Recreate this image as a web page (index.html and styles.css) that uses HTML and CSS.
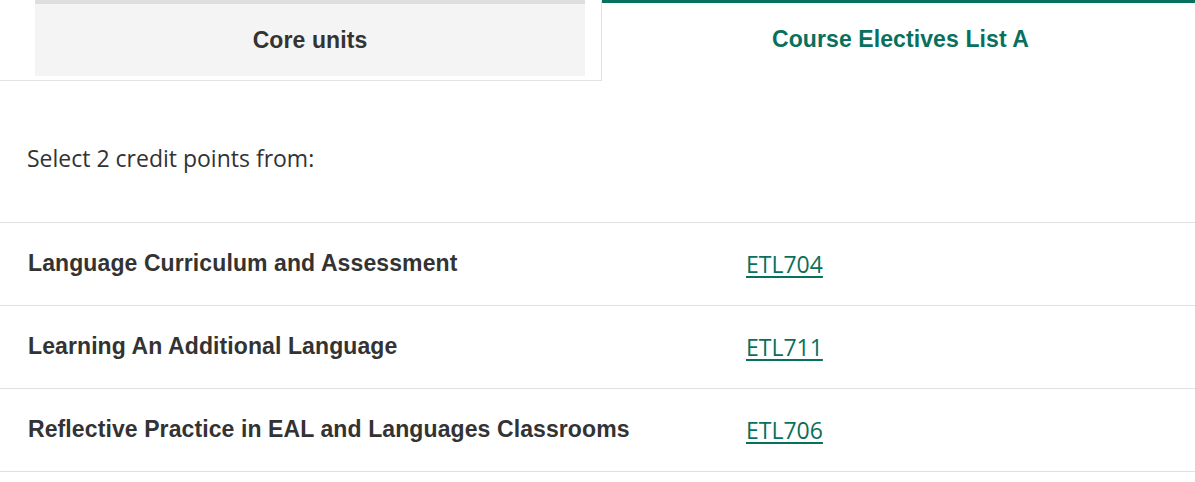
FILE: index.html
```html
<!DOCTYPE html>
<html>
<head>
<meta charset="utf-8">
<link rel="stylesheet" href="styles.css">
</head>
<body>
<div class="tabs">
  <div class="tab tab-inactive">
    <div class="tab-inner">Core units</div>
  </div>
  <div class="tab tab-active">Course Electives List A</div>
</div>
<p class="intro">Select 2 credit points from:</p>
<div class="units">
  <div class="row">
    <div class="name">Language Curriculum and Assessment</div>
    <div class="code"><a href="#">ETL704</a></div>
  </div>
  <div class="row">
    <div class="name">Learning An Additional Language</div>
    <div class="code"><a href="#">ETL711</a></div>
  </div>
  <div class="row">
    <div class="name">Reflective Practice in EAL and Languages Classrooms</div>
    <div class="code"><a href="#">ETL706</a></div>
  </div>
</div>
</body>
</html>
```

FILE: styles.css
```css
* { box-sizing: border-box; }
html, body { margin: 0; padding: 0; background: #fff; }
body { width: 1195px; overflow: hidden; color: #333; }

.tabs { display: flex; height: 81px; }
.tab {
  font-family: "Liberation Sans", Arial, sans-serif;
  font-weight: bold;
  font-size: 23px;
  letter-spacing: 0.1px;
}
.tab-inactive {
  width: 602px;
  height: 81px;
  padding: 0 16px 4px 35px;
  border-right: 1px solid #e2e2e2;
  border-bottom: 1px solid #e2e2e2;
}
.tab-inner {
  height: 76px;
  background: #f4f4f4;
  border-top: 4px solid #dedede;
  display: flex;
  align-items: center;
  justify-content: center;
  color: #333;
}
.tab-active {
  flex: 1;
  height: 80px;
  border-top: 3px solid #08705e;
  display: flex;
  align-items: center;
  justify-content: center;
  color: #08705e;
  padding: 0 0 5px 4px;
}

.intro {
  margin: 0;
  padding: 62px 27px 0;
  height: 141px;
  font-family: "Open Sans", sans-serif;
  font-size: 23px;
  line-height: 30px;
  color: #333;
}

.units { border-top: 1px solid #e0e0e0; }
.row {
  display: grid;
  grid-template-columns: 746px 1fr;
  height: 83px;
  border-bottom: 1px solid #e0e0e0;
  align-items: center;
}
.name {
  padding: 0 0 2px 28px;
  font-family: "Liberation Sans", Arial, sans-serif;
  font-weight: bold;
  font-size: 23px;
  letter-spacing: 0.1px;
  color: #333;
}
.code {
  font-family: "Open Sans", sans-serif;
  font-size: 23px;
  padding-bottom: 1px;
}
.code a {
  color: #08705e;
  text-decoration: underline;
  text-decoration-thickness: 2px;
  text-underline-offset: 3px;
}
```
